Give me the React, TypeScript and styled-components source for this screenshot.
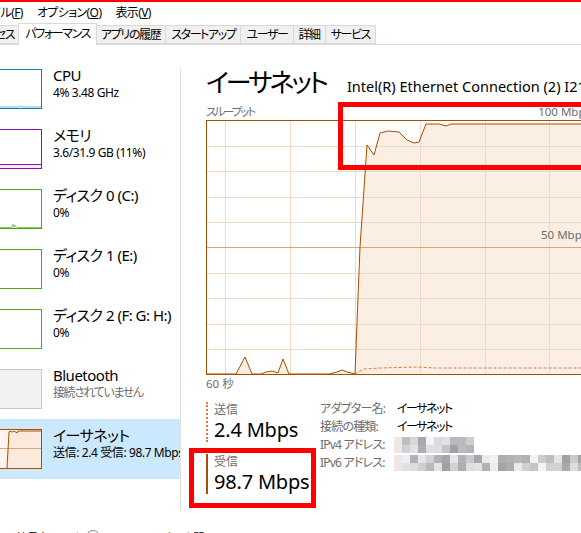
import React from 'react';
import styled, { createGlobalStyle } from 'styled-components';

const GlobalStyle = createGlobalStyle`
  html, body {
    margin: 0;
    padding: 0;
    background: #fff;
  }
  body {
    font-family: "Segoe UI", "Noto Sans", "Noto Sans CJK JP", sans-serif;
    font-feature-settings: "palt";
    color: #000;
  }
`;

const BROWN = '#a74f01';
const GRAY_TEXT = '#6d6d6d';

const Window = styled.div`
  position: relative;
  width: 581px;
  height: 533px;
  overflow: hidden;
  box-sizing: border-box;
  border-top: 2px solid #ff0000;
  background: #fff;
`;

const MenuBar = styled.div`
  display: flex;
  align-items: center;
  height: 20px;
  margin-left: -35px;
  font-size: 12px;
  letter-spacing: -0.6px;
  white-space: nowrap;
`;

const MenuItem = styled.span`
  padding: 0 7px;
  u {
    text-decoration: underline;
  }
`;

const TabBar = styled.div`
  display: flex;
  align-items: flex-end;
  height: 22px;
  margin-left: -30px;
  border-bottom: 1px solid #d9d9d9;
  font-size: 12px;
  letter-spacing: -1.4px;
  white-space: nowrap;
`;

const Tab = styled.div<{ $active?: boolean }>`
  position: relative;
  box-sizing: border-box;
  height: ${(p) => (p.$active ? '22px' : '19px')};
  line-height: ${(p) => (p.$active ? '20px' : '17px')};
  margin-bottom: ${(p) => (p.$active ? '-1px' : '0')};
  margin-left: ${(p) => (p.$active ? '-2px' : '-1px')};
  margin-right: ${(p) => (p.$active ? '-1px' : '0')};
  padding: 0 ${(p) => (p.$active ? '6px' : '5px')};
  border: 1px solid #d9d9d9;
  border-bottom: ${(p) => (p.$active ? 'none' : '1px solid #d9d9d9')};
  background: ${(p) => (p.$active ? '#fff' : '#f0f0f0')};
  z-index: ${(p) => (p.$active ? 1 : 0)};
`;

const Body = styled.div`
  display: flex;
  height: 480px;
`;

const Sidebar = styled.div`
  flex: none;
  width: 180px;
  padding-top: 14px;
  overflow: hidden;
`;

const Divider = styled.div`
  flex: none;
  width: 1px;
  height: 441px;
  margin-top: 24px;
  background: #dedede;
`;

const Item = styled.div<{ $selected?: boolean }>`
  display: flex;
  height: 60px;
  gap: 11px;
  background: ${(p) => (p.$selected ? '#cce8ff' : 'transparent')};
  white-space: nowrap;
`;

const Thumb = styled.div<{ $color: string; $bg?: string }>`
  flex: none;
  width: 52px;
  height: 40px;
  margin: 10px 0 0 -10px;
  box-sizing: border-box;
  border: 1px solid ${(p) => p.$color};
  background: ${(p) => p.$bg || '#fff'};
  svg {
    display: block;
  }
`;

const ItemText = styled.div`
  padding-top: 6px;
`;

const ItemTitle = styled.div`
  font-size: 15px;
  line-height: 20px;
  letter-spacing: -0.5px;
`;

const ItemSub = styled.div<{ $muted?: boolean }>`
  font-size: 12px;
  line-height: 16px;
  letter-spacing: ${(p) => (p.$muted ? '-1.4px' : '-0.4px')};
  color: ${(p) => (p.$muted ? GRAY_TEXT : '#000')};
`;

const Main = styled.div`
  flex: 1;
  min-width: 0;
  padding: 20px 0 0 25px;
  overflow: hidden;
`;

const TitleRow = styled.div`
  display: flex;
  align-items: baseline;
  gap: 21px;
  height: 34px;
  white-space: nowrap;
`;

const PanelTitle = styled.div`
  font-size: 26px;
  line-height: 34px;
  letter-spacing: -3px;
`;

const AdapterName = styled.div`
  font-size: 14.5px;
`;

const ChartHeader = styled.div`
  display: flex;
  justify-content: space-between;
  width: 385px;
  margin-top: 5px;
  font-size: 11.5px;
  line-height: 15px;
  color: ${GRAY_TEXT};
  white-space: nowrap;
`;

const ThroughputLabel = styled.span`
  letter-spacing: -2px;
`;

const ChartBox = styled.div`
  position: relative;
  width: 385px;
  height: 255px;
  margin-top: 1px;
  svg {
    display: block;
  }
`;

const ChartLabel = styled.span`
  position: absolute;
  left: 335px;
  top: 107px;
  font-size: 11.5px;
  color: ${GRAY_TEXT};
  white-space: nowrap;
`;

const TimeLabel = styled.div`
  margin-top: 1px;
  font-size: 11.5px;
  line-height: 15px;
  color: ${GRAY_TEXT};
`;

const Stats = styled.div`
  display: flex;
  margin-top: 11px;
`;

const RateColumn = styled.div`
  flex: none;
  display: flex;
  flex-direction: column;
  gap: 12px;
  width: 114px;
`;

const Rate = styled.div<{ $dashed?: boolean }>`
  height: 40px;
  padding-left: 6px;
  border-left: 2px ${(p) => (p.$dashed ? 'dotted #e07b39' : `solid ${BROWN}`)};
`;

const RateLabel = styled.div`
  font-size: 12px;
  line-height: 16px;
  color: ${GRAY_TEXT};
`;

const RateValue = styled.div`
  font-size: 20px;
  line-height: 24px;
  letter-spacing: -0.2px;
  white-space: nowrap;
`;

const InfoTable = styled.div`
  flex: none;
  display: grid;
  grid-template-columns: 77px auto;
  grid-auto-rows: 18px;
  margin-top: -2px;
  font-size: 12px;
  line-height: 18px;
  white-space: nowrap;
`;

const InfoKey = styled.div`
  color: ${GRAY_TEXT};
  letter-spacing: -0.8px;
`;

const InfoValue = styled.div`
  display: flex;
  align-items: center;
  letter-spacing: -1.5px;
`;

const Mosaic = styled.div<{ $cols: number }>`
  display: grid;
  grid-template-columns: repeat(${(p) => p.$cols}, 8px);
  grid-auto-rows: 8px;
  margin-left: -3px;
`;

const Footer = styled.div`
  display: flex;
  align-items: flex-start;
  gap: 8px;
  padding: 5px 0 0 6px;
  font-size: 11.5px;
  line-height: 16px;
  letter-spacing: -1.2px;
  white-space: nowrap;
`;

const FooterSep = styled.span`
  width: 1px;
  height: 16px;
  margin-top: 2px;
  background: #bcbcbc;
`;

const FooterIcon = styled.span`
  width: 12px;
  height: 12px;
  border: 1px solid #888;
  border-radius: 50%;
`;

const Mark = styled.div<{ $x: number; $y: number; $w: number; $h: number }>`
  position: absolute;
  left: ${(p) => p.$x}px;
  top: ${(p) => p.$y}px;
  width: ${(p) => p.$w}px;
  height: ${(p) => p.$h}px;
  box-sizing: border-box;
  border: 5px solid #ff0000;
  pointer-events: none;
`;

// chart data, local coords inside the 385x255 plot
const recvPoints: [number, number][] = [
  [0, 254], [30, 254], [39, 237], [46, 254], [55, 254], [60, 252], [66, 251], [72, 253],
  [77, 239], [83, 254], [123, 254], [131, 252], [136, 250], [141, 252], [149, 254],
  [154, 127], [161, 25], [168, 35], [174, 13], [182, 11], [193, 12], [201, 20], [208, 23],
  [213, 22], [220, 4], [233, 4], [240, 6], [245, 4], [385, 4],
];
const sendPoints: [number, number][] = [
  [149, 254], [158, 249], [175, 248], [210, 247], [230, 248], [385, 248],
];

const toPath = (pts: [number, number][]) =>
  pts.map(([x, y], i) => `${i ? 'L' : 'M'}${x},${y}`).join(' ');

const vGrid = [19, 84, 149, 214, 279, 343];
const hGrid = [26, 51, 77, 102, 153, 178, 204, 229];

function ThroughputChart() {
  return (
    <ChartBox>
      <svg width={385} height={255}>
        <path d={`${toPath(recvPoints)} L385,254 L0,254 Z`} fill="#fbeee3" />
        {vGrid.map((x) => (
          <line key={x} x1={x + 0.5} y1={0} x2={x + 0.5} y2={255} stroke="#f0dac6" />
        ))}
        {hGrid.map((y) => (
          <line key={y} x1={0} y1={y + 0.5} x2={385} y2={y + 0.5} stroke="#f0dac6" />
        ))}
        <line x1={0} y1={127.5} x2={385} y2={127.5} stroke="#d9a57c" />
        <path d={toPath(sendPoints)} fill="none" stroke="#e07b39" strokeDasharray="3 2" />
        <path d={toPath(recvPoints)} fill="none" stroke={BROWN} strokeWidth={1} />
        <rect x={0.5} y={0.5} width={384} height={254} fill="none" stroke={BROWN} />
      </svg>
      <ChartLabel>50 Mbps</ChartLabel>
    </ChartBox>
  );
}

type ThumbKind = 'cpu' | 'mem' | 'disk0' | 'empty' | 'net';

function ThumbGraph({ kind }: { kind: ThumbKind }) {
  return (
    <svg width={50} height={38}>
      {kind === 'cpu' && (
        <path d="M0,37 L28,37 L30,36 L32,37 L50,37" fill="none" stroke="#7fb6dc" />
      )}
      {kind === 'mem' && (
        <>
          <rect x={0} y={34} width={50} height={4} fill="#f4ecf7" />
          <line x1={0} y1={34.5} x2={50} y2={34.5} stroke="#8b12ae" />
        </>
      )}
      {kind === 'disk0' && (
        <path d="M0,37.5 L21,37.5 L22,34 L23,37.5 L24,35 L26,37.5 L50,37.5" fill="#e4f2d9" stroke="#8cc863" />
      )}
      {kind === 'net' && (
        <>
          <path d="M0,38 L16,38 L18,2 L19,1 L21,2 L23,1 L26,3 L27,1 L50,1 L50,38 Z" fill="#fbeadb" />
          <line x1={0} y1={18.5} x2={50} y2={18.5} stroke="#d9a57c" />
          <path d="M16,38 L18,2 L19,1 L21,2 L23,1 L26,3 L27,1 L50,1" fill="none" stroke={BROWN} />
        </>
      )}
    </svg>
  );
}

const sidebarItems: {
  title: string;
  sub: string;
  color: string;
  bg?: string;
  kind: ThumbKind;
  muted?: boolean;
  selected?: boolean;
}[] = [
  { title: 'CPU', sub: '4%  3.48 GHz', color: '#117dbb', kind: 'cpu' },
  { title: 'メモリ', sub: '3.6/31.9 GB (11%)', color: '#8b12ae', kind: 'mem' },
  { title: 'ディスク 0 (C:)', sub: '0%', color: '#4da60c', kind: 'disk0' },
  { title: 'ディスク 1 (E:)', sub: '0%', color: '#4da60c', kind: 'empty' },
  { title: 'ディスク 2 (F: G: H:)', sub: '0%', color: '#4da60c', kind: 'empty' },
  { title: 'Bluetooth', sub: '接続されていません', color: '#c9c9c9', bg: '#f2f2f2', kind: 'empty', muted: true },
  { title: 'イーサネット', sub: '送信: 2.4 受信: 98.7 Mbps', color: BROWN, bg: '#fdf5ee', kind: 'net', selected: true },
];

const shade = (i: number) => {
  const v = Math.abs(Math.sin(i * 12.9898 + 4.1) * 43758.5453) % 1;
  const g = Math.round(160 + v * 85);
  return `rgb(${g},${g},${g + 4})`;
};

function Blur({ cols, seed }: { cols: number; seed: number }) {
  const cells = Array.from({ length: cols * 2 }, (_, i) => i);
  return (
    <Mosaic $cols={cols}>
      {cells.map((i) => (
        <span key={i} style={{ background: i % cols === 0 ? '#f1e6e2' : shade(i + seed) }} />
      ))}
    </Mosaic>
  );
}

export default function App() {
  return (
    <>
      <GlobalStyle />
      <Window>
        <MenuBar>
          <MenuItem>ファイル(<u>F</u>)</MenuItem>
          <MenuItem>オプション(<u>O</u>)</MenuItem>
          <MenuItem>表示(<u>V</u>)</MenuItem>
        </MenuBar>
        <TabBar>
          <Tab>プロセス</Tab>
          <Tab $active>パフォーマンス</Tab>
          <Tab>アプリの履歴</Tab>
          <Tab>スタートアップ</Tab>
          <Tab>ユーザー</Tab>
          <Tab>詳細</Tab>
          <Tab>サービス</Tab>
        </TabBar>
        <Body>
          <Sidebar>
            {sidebarItems.map((it) => (
              <Item key={it.title} $selected={it.selected}>
                <Thumb $color={it.color} $bg={it.bg}>
                  <ThumbGraph kind={it.kind} />
                </Thumb>
                <ItemText>
                  <ItemTitle>{it.title}</ItemTitle>
                  <ItemSub $muted={it.muted}>{it.sub}</ItemSub>
                </ItemText>
              </Item>
            ))}
          </Sidebar>
          <Divider />
          <Main>
            <TitleRow>
              <PanelTitle>イーサネット</PanelTitle>
              <AdapterName>Intel(R) Ethernet Connection (2) I219-V</AdapterName>
            </TitleRow>
            <ChartHeader>
              <ThroughputLabel>スループット</ThroughputLabel>
              <span>100 Mbps</span>
            </ChartHeader>
            <ThroughputChart />
            <TimeLabel>60 秒</TimeLabel>
            <Stats>
              <RateColumn>
                <Rate $dashed>
                  <RateLabel>送信</RateLabel>
                  <RateValue>2.4 Mbps</RateValue>
                </Rate>
                <Rate>
                  <RateLabel>受信</RateLabel>
                  <RateValue>98.7 Mbps</RateValue>
                </Rate>
              </RateColumn>
              <InfoTable>
                <InfoKey>アダプター名:</InfoKey>
                <InfoValue>イーサネット</InfoValue>
                <InfoKey>接続の種類:</InfoKey>
                <InfoValue>イーサネット</InfoValue>
                <InfoKey>IPv4 アドレス:</InfoKey>
                <InfoValue>
                  <Blur cols={10} seed={3} />
                </InfoValue>
                <InfoKey>IPv6 アドレス:</InfoKey>
                <InfoValue>
                  <Blur cols={24} seed={40} />
                </InfoValue>
              </InfoTable>
            </Stats>
          </Main>
        </Body>
        <Footer>
          <span>⌃ 簡易表示(D)</span>
          <FooterSep />
          <FooterIcon />
          <span>リソース モニターを開く</span>
        </Footer>
        <Mark $x={338} $y={100} $w={260} $h={68} />
        <Mark $x={189} $y={446} $w={127} $h={60} />
      </Window>
    </>
  );
}
